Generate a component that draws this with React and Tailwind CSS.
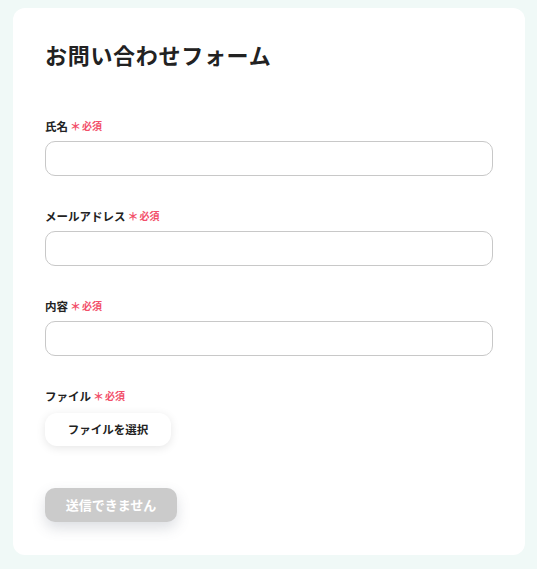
import React from "react";

const font = { fontFamily: '"Noto Sans CJK JP", "Noto Sans", sans-serif' };

function Label({ children }) {
  return (
    <div className="flex items-center h-4 leading-4">
      <span className="text-[11.5px] font-bold text-[#222]">{children}</span>
      <span className="ml-[2px] text-[11px] font-bold text-[#f2506a]">＊</span>
      <span className="ml-[1px] text-[10px] font-bold text-[#f2506a]">必須</span>
    </div>
  );
}

function Field({ label }) {
  return (
    <div className="flex flex-col gap-[7px]">
      <Label>{label}</Label>
      <input
        type="text"
        className="h-[35px] w-full rounded-[10px] border border-[#c8c8c8] bg-white px-3 outline-none"
      />
    </div>
  );
}

export default function App() {
  return (
    <div className="min-h-[569px] bg-[#f0f9f7] pt-2 pl-[13px] pr-3 pb-[15px]" style={font}>
      <div className="rounded-[12px] bg-white pt-[30px] px-8 pb-[33px]">
        <h2 className="text-[22px] leading-[33px] font-bold text-[#222] tracking-[0.7px]">
          お問い合わせフォーム
        </h2>
        <div className="mt-[47px] flex flex-col gap-8">
          <Field label="氏名" />
          <Field label="メールアドレス" />
          <Field label="内容" />
          <div className="flex flex-col gap-[9px]">
            <Label>ファイル</Label>
            <div>
              <button className="h-[33px] w-[126px] rounded-[12px] bg-white text-[11.5px] font-bold text-[#222] shadow-[0_2px_10px_rgba(0,0,0,0.1)]">
                ファイルを選択
              </button>
            </div>
          </div>
        </div>
        <div className="mt-[42px]">
          <button className="h-[34px] w-[132px] rounded-[10px] bg-[#cbcbcb] text-[13px] font-bold text-white shadow-[0_6px_14px_rgba(80,90,110,0.2)]">
            送信できません
          </button>
        </div>
      </div>
    </div>
  );
}
